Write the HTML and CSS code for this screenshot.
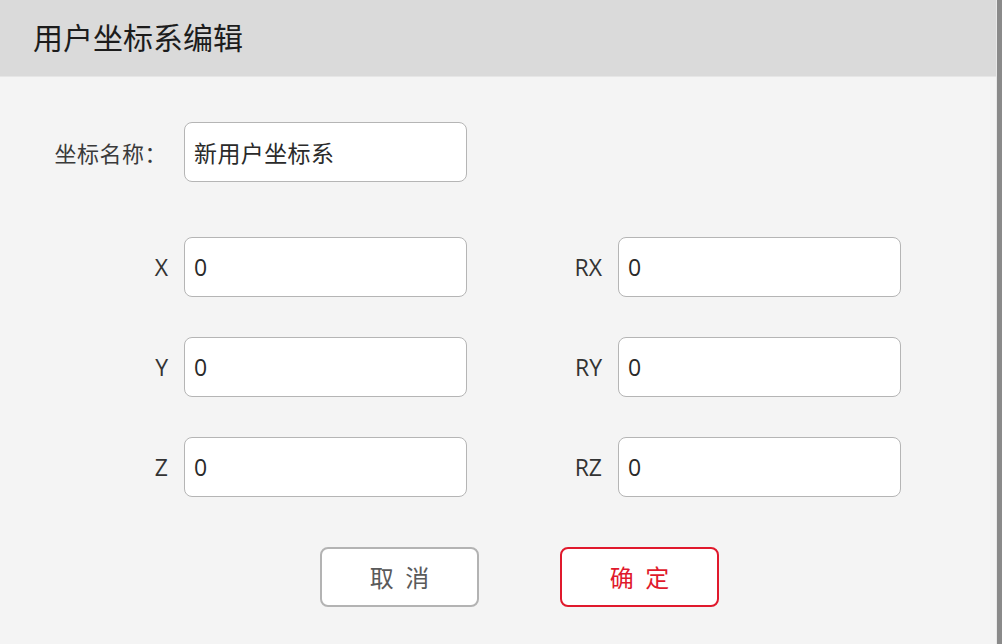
FILE: index.html
```html
<!DOCTYPE html>
<html lang="zh-CN">
<head>
<meta charset="utf-8">
<title>用户坐标系编辑</title>
<link rel="stylesheet" href="styles.css">
</head>
<body>
<div class="dialog">
  <div class="panel">
    <header class="header"><h1 class="title">用户坐标系编辑</h1></header>
    <main class="content">
      <div class="name-row">
        <label class="name-label">坐标名称：</label>
        <div class="field field-name">新用户坐标系</div>
      </div>
      <div class="coords">
        <label class="coord-label">X</label>
        <div class="field">0</div>
        <label class="coord-label">RX</label>
        <div class="field">0</div>
        <label class="coord-label">Y</label>
        <div class="field">0</div>
        <label class="coord-label">RY</label>
        <div class="field">0</div>
        <label class="coord-label">Z</label>
        <div class="field">0</div>
        <label class="coord-label">RZ</label>
        <div class="field">0</div>
      </div>
      <div class="actions">
        <button class="btn btn-cancel">取 消</button>
        <button class="btn btn-ok">确 定</button>
      </div>
    </main>
  </div>
  <div class="edge"></div>
</div>
</body>
</html>
```

FILE: styles.css
```css
* { box-sizing: border-box; }
html, body { margin: 0; padding: 0; }
body {
  width: 1002px;
  height: 644px;
  overflow: hidden;
  background: #f4f4f4;
  font-family: "Open Sans", "Noto Sans CJK SC", sans-serif;
}
.dialog {
  width: 1002px;
  height: 644px;
  display: flex;
  background: #f4f4f4;
}
.panel {
  width: 997px;
  flex: none;
  display: flex;
  flex-direction: column;
  border-right: 1px solid #e8e8e8;
}
.edge {
  width: 5px;
  flex: none;
  background: #8a8a8a;
}
.header {
  height: 77px;
  background: #dadada;
  border-bottom: 1px solid #e6e6e6;
  display: flex;
  align-items: center;
  padding-left: 33px;
}
.title {
  margin: 0;
  font-family: "Noto Sans CJK SC", sans-serif;
  font-size: 30px;
  font-weight: 400;
  color: #1c1c1c;
  line-height: 1;
  padding-bottom: 4px;
}
.content {
  padding: 45px 0 0 40px;
}
.name-row {
  display: flex;
  align-items: center;
  gap: 12px;
}
.name-label {
  width: 132px;
  text-align: right;
  font-family: "Noto Sans CJK SC", sans-serif;
  font-size: 22px;
  color: #3a3a3a;
  padding-right: 5px;
  letter-spacing: 0.5px;
}
.field {
  width: 283px;
  height: 60px;
  background: #fff;
  border: 1px solid #b5b5b5;
  border-radius: 8px;
  display: flex;
  align-items: center;
  padding-left: 9px;
  font-size: 23px;
  color: #2a2a2a;
}
.field-name {
  font-family: "Noto Sans CJK SC", sans-serif;
  font-size: 23px;
  letter-spacing: 0.4px;
}
.coords {
  margin-top: 55px;
  display: grid;
  grid-template-columns: 128px 283px 119px 283px;
  column-gap: 16px;
  row-gap: 40px;
  align-items: center;
}
.coord-label {
  text-align: right;
  font-size: 23px;
  color: #333;
}
.actions {
  margin-top: 50px;
  display: flex;
  gap: 81px;
  padding-left: 280px;
}
.btn {
  width: 159px;
  height: 60px;
  background: #fff;
  border-radius: 8px;
  font-family: "Noto Sans CJK SC", sans-serif;
  font-size: 24px;
  letter-spacing: 3px;
  padding: 0 0 2px 3px;
}
.btn-cancel {
  border: 2px solid #b3b3b3;
  color: #5a5a5a;
}
.btn-ok {
  border: 2px solid #e0192c;
  color: #e0192c;
}
```
